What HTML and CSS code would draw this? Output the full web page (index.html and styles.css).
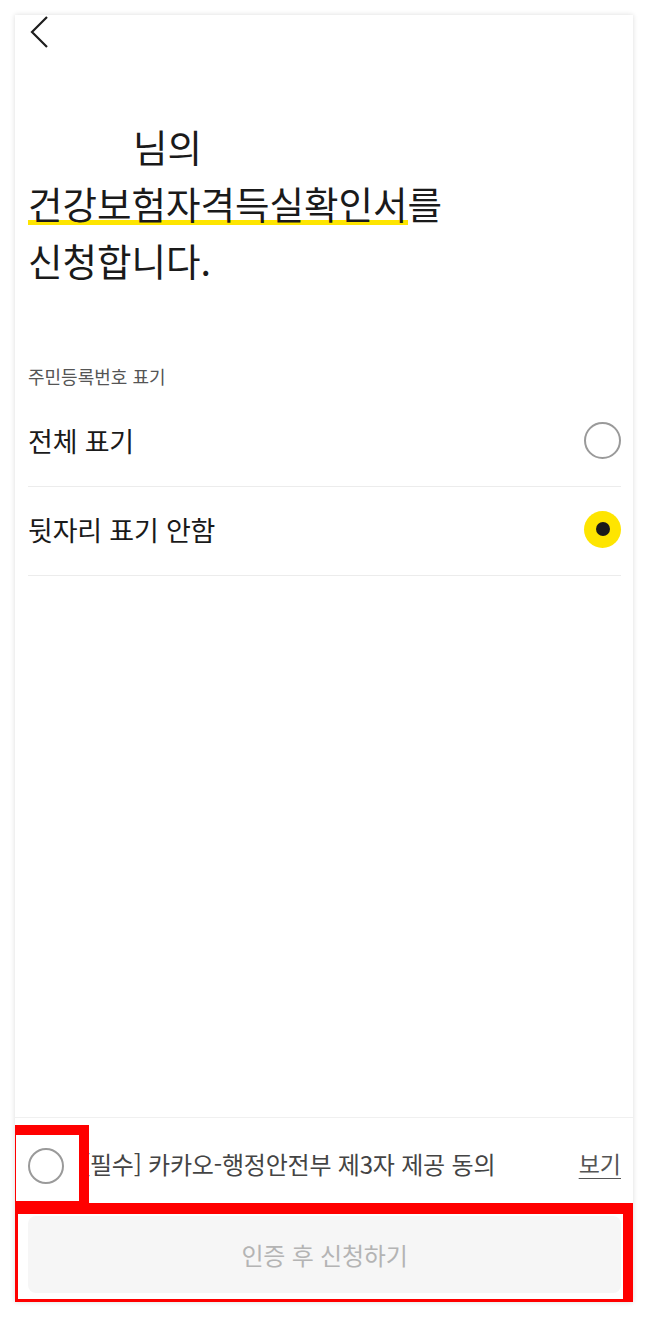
FILE: index.html
```html
<!DOCTYPE html>
<html lang="ko">
<head>
<meta charset="utf-8">
<link rel="stylesheet" href="styles.css">
</head>
<body>
<div class="card">
  <div class="header">
    <svg class="back" width="20" height="34" viewBox="0 0 20 34"><polyline points="17,2 2,17 17,32" fill="none" stroke="#1e1e1e" stroke-width="2.2" stroke-linejoin="miter"/></svg>
  </div>
  <h1 class="title">
    <span class="name"></span>님의<br>
    <span class="hl">건강보험자격득실확인서</span>를<br>
    신청합니다.
  </h1>
  <div class="label">주민등록번호 표기</div>
  <div class="options">
    <div class="option">
      <span class="opt-text">전체 표기</span>
      <span class="radio"></span>
    </div>
    <div class="option">
      <span class="opt-text">뒷자리 표기 안함</span>
      <span class="radio on"><span class="dot"></span></span>
    </div>
  </div>
  <div class="bottom">
    <div class="agree">
      <span class="check"></span>
      <span class="agree-text">[필수] 카카오-행정안전부 제3자 제공 동의</span>
      <span class="view">보기</span>
    </div>
    <div class="btn">인증 후 신청하기</div>
  </div>
</div>
<div class="mark mark1"></div>
<div class="mark mark2"></div>
</body>
</html>
```
FILE: styles.css
```css
html, body {
  margin: 0;
  padding: 0;
  background: #ffffff;
}
body {
  font-family: "Noto Sans CJK KR", "Noto Sans", sans-serif;
  color: #1a1a1a;
  position: relative;
  height: 1318px;
  overflow: hidden;
}
.card {
  margin: 15px 15px 0 15px;
  height: 1287px;
  background: #fff;
  box-shadow: 0 0 5px rgba(0,0,0,0.14);
  display: flex;
  flex-direction: column;
  box-sizing: border-box;
}
.header {
  height: 50px;
  padding-left: 15px;
  box-sizing: border-box;
}
.back {
  display: block;
}
.title {
  margin: 52px 0 0 0;
  padding: 0 12px 0 13px;
  font-size: 37.5px;
  font-weight: 400;
  line-height: 57px;
  letter-spacing: 0;
  color: #1a1a1a;
}
.name {
  display: inline-block;
  width: 105px;
}
.hl {
  background-image: linear-gradient(#fee500, #fee500);
  background-repeat: no-repeat;
  background-size: 100% 5px;
  background-position: 0 45px;
}
.label {
  margin-top: 76px;
  padding: 0 12px 0 13px;
  font-size: 18px;
  line-height: 24px;
  color: #555;
}
.options {
  margin: 10px 12px 0 13px;
}
.option {
  height: 89px;
  padding-bottom: 4px;
  box-sizing: border-box;
  border-bottom: 1px solid #ececec;
  display: flex;
  align-items: center;
  justify-content: space-between;
}
.opt-text {
  font-size: 27px;
  color: #1a1a1a;
  letter-spacing: -0.2px;
}
.radio {
  width: 37px;
  height: 37px;
  border-radius: 50%;
  border: 2px solid #9a9a9a;
  box-sizing: border-box;
  display: flex;
  align-items: center;
  justify-content: center;
}
.radio.on {
  border: none;
  background: #fee500;
}
.dot {
  width: 14px;
  height: 14px;
  border-radius: 50%;
  background: #1a1a1a;
}
.bottom {
  margin-top: auto;
  border-top: 1px solid #f0f0f0;
  padding: 0 12px 9px 13px;
}
.agree {
  height: 96px;
  display: flex;
  align-items: center;
}
.check {
  width: 36px;
  height: 36px;
  border-radius: 50%;
  border: 2px solid #9a9a9a;
  box-sizing: border-box;
  flex: none;
}
.agree-text {
  margin-left: 18px;
  margin-bottom: 6px;
  font-size: 24px;
  color: #444;
  letter-spacing: -0.2px;
  flex: 1;
}
.view {
  margin-bottom: 6px;
  font-size: 23px;
  color: #555;
  text-decoration: underline;
  text-underline-offset: 5px;
  text-decoration-thickness: 1px;
}
.btn {
  margin-top: 2px;
  height: 77px;
  border-radius: 8px;
  background: #f6f6f6;
  color: #b4b4b4;
  font-size: 24px;
  display: flex;
  align-items: center;
  justify-content: center;
  letter-spacing: -0.2px;
}
.mark {
  position: absolute;
  border-style: solid;
  border-color: #ff0000;
  box-sizing: border-box;
}
.mark1 {
  left: 15px;
  top: 1125px;
  width: 74px;
  height: 80px;
  border-width: 10px 10px 4px 1px;
}
.mark2 {
  left: 15px;
  top: 1203px;
  width: 618px;
  height: 99px;
  border-width: 11px 10px 3px 3px;
}
```
